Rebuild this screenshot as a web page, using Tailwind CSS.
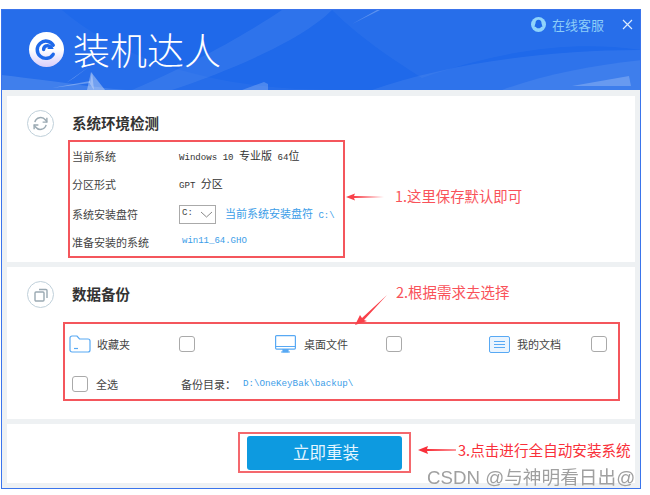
<!DOCTYPE html>
<html lang="zh-CN">
<head>
  <meta charset="UTF-8" />
  <title>装机达人</title>
  <script src="https://cdn.jsdelivr.net/npm/@tailwindcss/browser@4"></script>
</head>
<body class="bg-white h-[495px] overflow-hidden font-['Noto_Sans_CJK_SC',sans-serif] text-[#444]">
  <div class="relative blur-[0.35px] ml-[1px] mt-[9px] w-[640px] h-[480px] border border-[#3a74ec] bg-[#eef1f3] flex flex-col">

    <!-- Header -->
    <div class="relative h-[80px] shrink-0 overflow-hidden bg-[#1f69ea] flex items-center pl-[27px] pb-[2px]">
      <svg class="absolute inset-0" width="640" height="80" viewBox="0 0 640 80">
        <path d="M0 80 L0 65 C60 72 110 80 130 80Z" fill="#fff" fill-opacity="0.12"/>
        <path d="M130 80 C200 50 250 20 280 0 L330 0 C300 30 230 60 170 80Z" fill="#fff" fill-opacity="0.07"/>
        <path d="M60 0 C130 60 240 80 330 80 L0 80 L0 0Z" fill="#fff" fill-opacity="0.03"/>
        <path d="M330 0 C360 30 400 55 420 68 C500 40 570 30 640 40 L640 0Z" fill="#fff" fill-opacity="0.04"/>
        <path d="M370 80 C440 55 540 40 640 40 L640 80Z" fill="#fff" fill-opacity="0.07"/>
        <path d="M500 80 C540 65 590 55 640 50 L640 80Z" fill="#fff" fill-opacity="0.08"/>
        <path d="M88 74 L90 62 L92 80 Z M88 71 L50 78 L88 73 Z M64 73 L88 56 L72 68Z" fill="#fff" fill-opacity="0.3"/>
        <path d="M85 80 L89 62 L103 80Z" fill="#fff" fill-opacity="0.35"/>
        <path d="M240 80 L262 72 L266 74 L266 80Z" fill="#fff" fill-opacity="0.2"/>
        <path d="M570 76 L627 66 L629 76 Z" fill="#fff" fill-opacity="0.22"/>
        <path d="M350 14 L375 0 L378 0 Z" fill="#fff" fill-opacity="0.25"/>
      </svg>
      <span class="relative w-[35px] h-[35px] rounded-full bg-gradient-to-b from-white from-50% to-[#d8cdfa] flex items-center justify-center">
        <svg width="23" height="23" viewBox="0 0 24 24" fill="none" stroke="#1f69ea" stroke-width="3.6" stroke-linecap="round">
          <path d="M19 7.500A9 9 0 1 0 19 17"/>
          <path d="M9 12a4 4 0 0 1 7-2.600"/>
          <path d="M12.500 11.500h7l-2-4z" fill="#1f69ea" stroke="none"/>
        </svg>
      </span>
      <span class="relative ml-[9px] text-[37px] font-light leading-none text-white">装机达人</span>
      <div class="absolute top-[7px] right-[7px] flex items-center">
        <svg width="15" height="15" viewBox="0 0 15 15">
          <circle cx="7.500" cy="7.500" r="7.500" fill="#8fd3fb"/>
          <path d="M7.500 2.800c2 0 3 1.500 3 3.400 0 .6.800 1.800.800 3.200 0 .7-.5.700-1.100 0-.2 1-1 1.900-2.700 1.900s-2.500-.9-2.700-1.900c-.6.700-1.100.7-1.100 0 0-1.400.8-2.600.8-3.200 0-1.900 1-3.400 3-3.400z" fill="#1f69ea"/>
        </svg>
        <span class="ml-[6px] text-[13px] leading-none text-[#8ccdf8]">在线客服</span>
        <svg class="ml-[18px]" width="11" height="11" viewBox="0 0 11 11" stroke="#dcecff" stroke-width="1.200"><path d="M1 1l9 9M10 1l-9 9"/></svg>
      </div>
    </div>

    <!-- 系统环境检测 -->
    <section class="mt-[6px] mx-[5px] h-[166px] shrink-0 bg-white pt-[14px] pl-[20px]">
      <div class="flex items-center h-[27px]">
        <span class="w-[27px] h-[27px] rounded-full border border-[#bfd0da] flex items-center justify-center">
          <svg width="17" height="17" viewBox="0 0 24 24" fill="none" stroke="#9aa9b2" stroke-width="2">
            <path d="M4 10a8.500 8.500 0 0 1 15-3l2 3"/><path d="M20 14a8.500 8.500 0 0 1-15 3l-2-3"/>
            <path d="M21 4v6h-6M3 20v-6h6"/>
          </svg>
        </span>
        <h2 class="ml-[18px] pb-[2px] text-[14.500px] font-bold text-[#333]">系统环境检测</h2>
      </div>
      <div class="mt-[3px] ml-[41px] w-[277px] h-[118px] border-2 border-[#f4565c] pl-[2px] text-[11px] grid grid-cols-[107px_1fr] grid-rows-[26px_30px_30px_26px] items-center py-[1px]">
        <span>当前系统</span>
        <span class="text-[#333]"><span class="font-['Liberation_Mono',monospace] text-[9.100px]">Windows 10 </span>专业版<span class="font-['Liberation_Mono',monospace] text-[9.100px]"> 64</span>位</span>
        <span>分区形式</span>
        <span class="text-[#333]"><span class="font-['Liberation_Mono',monospace] text-[9.100px]">GPT </span>分区</span>
        <span>系统安装盘符</span>
        <div class="flex items-center">
          <span class="w-[37px] h-[19px] border border-[#aaa] flex items-center justify-between px-[2px] font-['Liberation_Mono',monospace] text-[9px]">C:
            <svg width="13" height="7" viewBox="0 0 13 7" fill="none" stroke="#888"><path d="M1 1l5.500 5L12 1"/></svg>
          </span>
          <span class="ml-[9px] text-[#3b9de8]">当前系统安装盘符<span class="font-['Liberation_Mono',monospace] text-[9px]"> C:\</span></span>
        </div>
        <span>准备安装的系统</span>
        <span class="pl-[3px] font-['Liberation_Mono',monospace] text-[9px] text-[#3b9de8]">win11_64.GHO</span>
      </div>
    </section>

    <!-- 数据备份 -->
    <section class="mt-[5px] mx-[5px] h-[152px] shrink-0 bg-white pt-[14px] pl-[20px]">
      <div class="flex items-center h-[27px]">
        <span class="w-[27px] h-[27px] rounded-full border border-[#bfd0da] flex items-center justify-center">
          <svg width="16" height="16" viewBox="0 0 16 16" fill="none" stroke="#9aa9b2" stroke-width="1.400">
            <rect x="2" y="5" width="9" height="9" rx="1"/><path d="M6 2.500h7a1 1 0 0 1 1 1V11"/>
          </svg>
        </span>
        <h2 class="ml-[18px] pb-[2px] text-[14.500px] font-bold text-[#333]">数据备份</h2>
      </div>
      <div class="mt-[14px] ml-[36px] w-[557px] h-[79px] border-2 border-[#f4565c] text-[11px]">
        <div class="flex items-center h-[40px]">
          <svg class="ml-[4px]" width="22" height="18" viewBox="0 0 22 18" fill="none" stroke="#58a9f4" stroke-width="1.200">
            <path d="M1 3a2 2 0 0 1 2-2h5l2.500 3H19a2 2 0 0 1 2 2v9a2 2 0 0 1-2 2H3a2 2 0 0 1-2-2z"/><path d="M5 13.500h4"/>
          </svg>
          <span class="ml-[6px] w-[82px]">收藏夹</span>
          <span class="w-[16px] h-[16px] rounded-[3px] border border-[#aaa]"></span>
          <svg class="ml-[80px]" width="21" height="18" viewBox="0 0 21 18" fill="none" stroke="#58a9f4" stroke-width="1.200">
            <rect x="0.600" y="0.600" width="19.800" height="13.500" rx="1"/><path d="M0.600 11.500h19.800M6 17h9" /><path d="M8 14.500h5V17H8z" fill="#58a9f4"/>
          </svg>
          <span class="ml-[8px] w-[82px]">桌面文件</span>
          <span class="w-[16px] h-[16px] rounded-[3px] border border-[#aaa]"></span>
          <span class="ml-[87px] w-[21px] h-[17px] rounded-[2px] border border-[#58a9f4] bg-[#eaf4fe] flex flex-col items-center justify-center gap-[2px]">
            <i class="block w-[11px] h-px bg-[#58a9f4]"></i><i class="block w-[11px] h-px bg-[#58a9f4]"></i><i class="block w-[11px] h-px bg-[#58a9f4]"></i>
          </span>
          <span class="ml-[7px] w-[74px]">我的文档</span>
          <span class="w-[16px] h-[16px] rounded-[3px] border border-[#aaa]"></span>
        </div>
        <div class="flex items-center h-[35px] pt-[5px]">
          <span class="ml-[7px] w-[16px] h-[16px] rounded-[3px] border border-[#aaa]"></span>
          <span class="ml-[8px] w-[85px]">全选</span>
          <span class="w-[62px]">备份目录：</span>
          <span class="font-['Liberation_Mono',monospace] text-[9.200px] text-[#3b9de8]">D:\OneKeyBak\backup\</span>
        </div>
      </div>
    </section>

    <!-- Footer -->
    <section class="mt-[5px] mx-[5px] h-[59px] shrink-0 bg-white pt-[8px] pl-[231px]">
      <div class="w-[173px] h-[41px] border-2 border-[#f4686d] flex items-center justify-center">
        <button class="w-[155px] h-[34px] rounded-[3px] bg-[#0d9ae0] pl-[3px] text-[16.500px] text-[#e6f6ff]">立即重装</button>
      </div>
    </section>

    <!-- Annotations -->
    <span class="absolute left-[393px] top-[175px] text-[14.400px] leading-[22px] text-[#f9525a]">1.这里保存默认即可</span>
    <span class="absolute left-[394px] top-[271px] text-[14.500px] leading-[22px] text-[#f9525a]">2.根据需求去选择</span>
    <span class="absolute left-[456px] top-[429px] text-[14.600px] leading-[22px] text-[#f9303a]">3.点击进行全自动安装系统</span>
    <svg class="absolute left-[343px] top-[180px]" width="40" height="14" viewBox="0 0 40 14"><path d="M1 7L10 3.500L9 6L39 7L9 8L10 10.500Z" fill="#f9414a"/></svg>
    <svg class="absolute left-[352px] top-[284px]" width="34" height="32" viewBox="0 0 34 32"><path d="M1 31L6 21L8 24L33 1L10 26L13 27Z" fill="#f9414a"/></svg>
    <svg class="absolute left-[415px] top-[433px]" width="40" height="14" viewBox="0 0 40 14"><path d="M1 7L11 3L10 6L39 6.500V7.500L10 8L11 11Z" fill="#f9303a"/></svg>
    <span class="absolute left-[425px] top-[454px] text-[18.700px] leading-[24px] text-[#a0a0a0] font-['Liberation_Sans',sans-serif]">CSDN @<span class="font-['Noto_Sans_CJK_SC',sans-serif]">与神明看日出</span>@</span>
  </div>
</body>
</html>
